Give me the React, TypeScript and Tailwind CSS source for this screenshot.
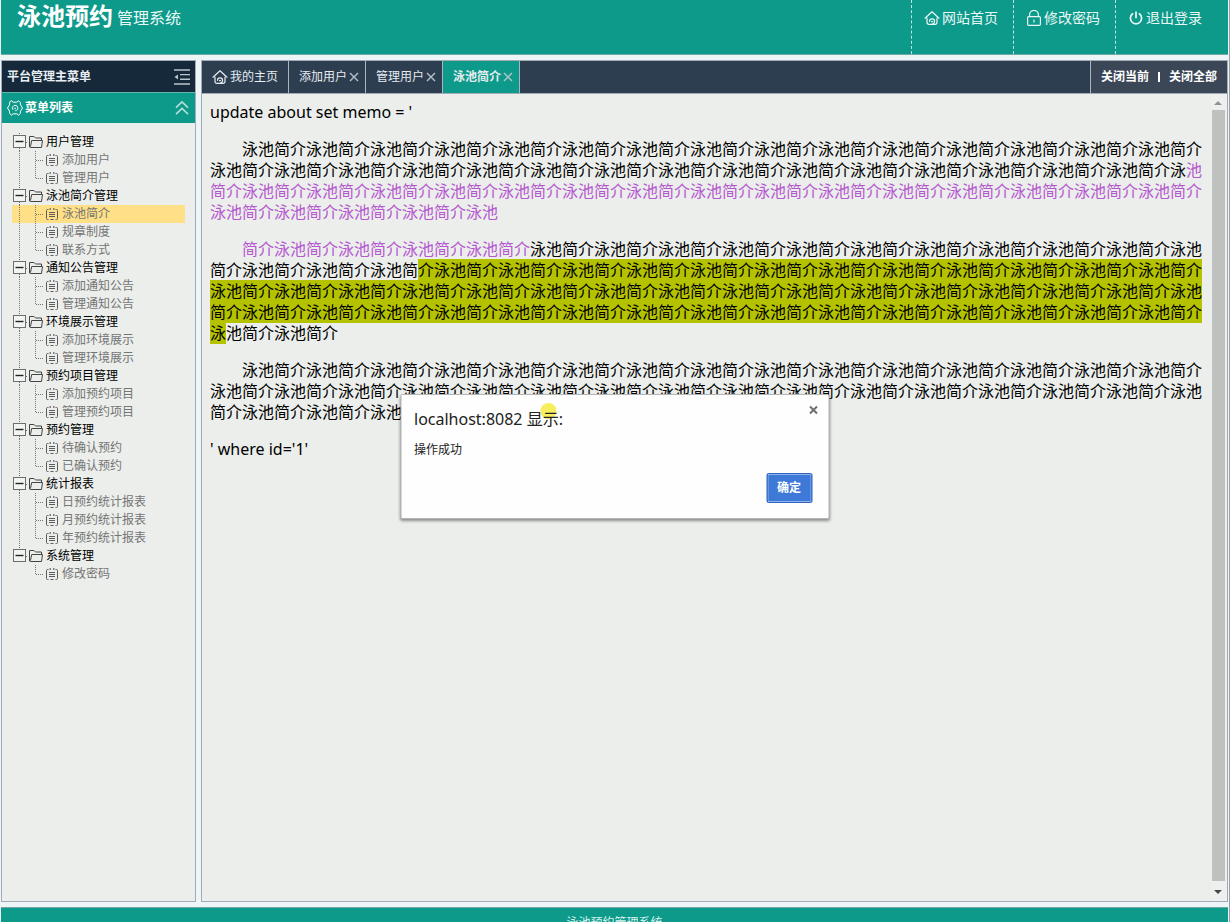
import { useState } from "react";
import clsx from "clsx";

const menu = [
	{ title: "用户管理", items: ["添加用户", "管理用户"] },
	{ title: "泳池简介管理", items: ["泳池简介", "规章制度", "联系方式"] },
	{ title: "通知公告管理", items: ["添加通知公告", "管理通知公告"] },
	{ title: "环境展示管理", items: ["添加环境展示", "管理环境展示"] },
	{ title: "预约项目管理", items: ["添加预约项目", "管理预约项目"] },
	{ title: "预约管理", items: ["待确认预约", "已确认预约"] },
	{
		title: "统计报表",
		items: ["日预约统计报表", "月预约统计报表", "年预约统计报表"],
	},
	{ title: "系统管理", items: ["修改密码"] },
];

const tabs = ["添加用户", "管理用户", "泳池简介"];

const intro = (n: number) => "泳池简介".repeat(n);

function HomeIcon() {
	return (
		<svg className="size-4 shrink-0" viewBox="0 0 16 16" fill="none" stroke="currentColor" strokeWidth="1.2" strokeLinecap="round" strokeLinejoin="round">
			<path d="M1 8.2 8 1.8l7 6.4" />
			<path d="M3 8v4.2c0 1.3.8 2.1 2.1 2.1h5.8c1.3 0 2.1-.8 2.1-2.1V8" />
			<path d="M8.4 14.2c1.5-.4 2.2-1.4 2.2-2.7A2.6 2.6 0 0 0 8 8.9a2.5 2.5 0 0 0-2.5 2.4" />
			<path d="M7.5 11.6h1" />
		</svg>
	);
}

function LockIcon() {
	return (
		<svg className="size-4 shrink-0" viewBox="0 0 16 16" fill="none" stroke="currentColor" strokeWidth="1.2" strokeLinecap="round">
			<rect x="1.6" y="6.6" width="12.8" height="8.8" rx="1.2" />
			<path d="M3.6 6.4V4.8a4.4 4.4 0 0 1 8.8 0v1.6M8 10v2" />
		</svg>
	);
}

function PowerIcon() {
	return (
		<svg className="size-4 shrink-0" viewBox="0 0 16 16" fill="none" stroke="currentColor" strokeWidth="1.7" strokeLinecap="round">
			<path d="M8 2v5.6M4.6 3.8a5.6 5.6 0 1 0 6.8 0" />
		</svg>
	);
}

function GearIcon() {
	return (
		<svg className="size-4 shrink-0" viewBox="0 0 16 16" fill="none" stroke="currentColor" strokeWidth="1" strokeLinejoin="round" strokeLinecap="round">
			<path d="M4.4.8 6.2 2.2h3.600L11.600.8l1.700 1.700.2 2.300L15.500 8l-2 3.200-.2 2.300-1.700 1.700-1.800-1.400H6.200l-1.800 1.400-1.700-1.700-.2-2.300L.5 8l2-3.200.2-2.300z" />
			<path d="M5.800 9.500a2.700 2.700 0 1 1 2.800 1.200" />
			<path d="M7.700 8.300h.9" />
		</svg>
	);
}

function CollapseIcon() {
	return (
		<svg className="h-4 w-4" viewBox="0 0 16 16" stroke="currentColor" strokeWidth="1.4">
			<path d="M0 1h16M6 5.6h10M6 10.2h10M0 15h16" />
			<path d="m.5 8 3.5-2.6v5.2z" fill="currentColor" stroke="none" />
		</svg>
	);
}

function ChevronsUpIcon() {
	return (
		<svg className="h-4 w-3.5" viewBox="0 0 14 16" fill="none" stroke="currentColor" strokeWidth="1.6">
			<path d="m1 7.6 6-5.8 6 5.8M1 14.2l6-5.8 6 5.8" />
		</svg>
	);
}

// expander box with the dotted trunk running through it
function ToggleIcon({ last }: { last: boolean }) {
	return (
		<svg className="h-[18px] w-4 shrink-0" viewBox="0 0 16 18" fill="none" stroke="#6a6e70">
			<path d={last ? "M7.5 0v3" : "M7.5 0v3M7.5 15v3"} strokeDasharray="1 1" />
			<path d="M14 9.5h3" strokeDasharray="1 1" />
			<rect x="1.5" y="2.5" width="12" height="12" fill="#f2f4f2" />
			<path d="M3.5 8.5h8" strokeWidth="1.4" stroke="#222" />
		</svg>
	);
}

function FolderIcon() {
	return (
		<svg className="h-[18px] w-4 shrink-0" viewBox="0 0 16 18" fill="none" stroke="#444" strokeLinejoin="round">
			<path d="M13.500 7.500v-2.500H7.500l-1.500-1.500H1.500v10.500l1.500.5h10.500l1-7H3.700L2.500 13.500" />
		</svg>
	);
}

function BranchLines({ lastGroup, lastItem }: { lastGroup: boolean; lastItem: boolean }) {
	return (
		<svg className="h-[18px] w-8 shrink-0" viewBox="0 0 32 18" stroke="#777" strokeDasharray="1 1">
			{!lastGroup && <path d="M7.5 0v18" />}
			<path d={lastItem ? "M23.5 0v10" : "M23.5 0v18"} />
			<path d="M24 9.5h8" />
		</svg>
	);
}

function DocIcon() {
	return (
		<svg className="ml-px h-[18px] w-4 shrink-0" viewBox="0 0 16 18" fill="none" stroke="#5a5a5a" strokeLinejoin="round">
			<path d="M3.500 4.500h-1q-1 0-1 1v8q0 1 1 1h1M10.500 4.500h1q1 0 1 1v8q0 1-1 1h-1" />
			<path d="M4.500 4h1.500M8 4h1.500" strokeWidth="1.500" />
			<path d="M4 7.500h6M4 9.500h6M4 11.500h6M5.500 14.500h3" />
		</svg>
	);
}

function Sidebar() {
	const [active, setActive] = useState("泳池简介");
	return (
		<aside className="flex w-[195px] shrink-0 flex-col border border-[#a3abb8] bg-[#ebeeeb]">
			<div className="flex h-[31px] items-center justify-between bg-[#15293a] pr-[5px] pl-[5px] text-[#e8eef2]">
				<h2 className="font-bold">平台管理主菜单</h2>
				<button type="button" aria-label="收起" className="text-[#b9c4cc]">
					<CollapseIcon />
				</button>
			</div>
			<div className="flex h-[31px] items-center justify-between border-t border-[#5fb8ac] bg-[#0d9a8a] pr-1.5 pl-[5px] text-white">
				<h2 className="flex items-center gap-0.5 font-bold">
					<GearIcon />
					菜单列表
				</h2>
				<button type="button" aria-label="折叠" className="text-[#b5e0da]">
					<ChevronsUpIcon />
				</button>
			</div>
			<ul className="p-2.5 leading-[18px]">
				{menu.map((group, g) => {
					const lastGroup = g === menu.length - 1;
					return (
						<li key={group.title}>
							<button type="button" className="flex h-[18px] w-full items-center text-black">
								<ToggleIcon last={lastGroup} />
								<FolderIcon />
								<span className="pl-0.5">{group.title}</span>
							</button>
							<ul>
								{group.items.map((item, i) => (
									<li key={item}>
										<a
											href="#"
											onClick={() => setActive(item)}
											className={clsx(
												"flex h-[18px] items-center text-[#757575]",
												item === active && "bg-[#ffe086]",
											)}
										>
											<BranchLines
												lastGroup={lastGroup}
												lastItem={i === group.items.length - 1}
											/>
											<DocIcon />
											<span className="pl-px">{item}</span>
										</a>
									</li>
								))}
							</ul>
						</li>
					);
				})}
			</ul>
		</aside>
	);
}

function TabBar() {
	return (
		<div className="flex h-[33px] shrink-0 border-b border-[#a3abb8] bg-[#2d3e50] text-[#e6ecf0]">
			<button type="button" className="flex w-[87px] items-center justify-center gap-0.5 border-r border-[#a9b4bf]">
				<HomeIcon />
				我的主页
			</button>
			{tabs.map((tab) => (
				<button
					type="button"
					key={tab}
					className={clsx(
						"flex w-[77px] items-center gap-0.5 border-r border-[#a9b4bf] pl-2.5",
						tab === "泳池简介" && "bg-[#0d9a8a] font-bold",
					)}
				>
					{tab}
					<svg className="size-2.5 shrink-0" viewBox="0 0 10 10" stroke="#b4c3cb" strokeWidth="1.4">
						<path d="m1 1 8 8M9 1 1 9" />
					</svg>
				</button>
			))}
			<div className="ml-auto flex w-[137px] items-center justify-between border-l border-[#a9b4bf] bg-[#3b4656] px-2.5 font-bold text-white">
				<button type="button">关闭当前</button>
				<span className="h-2.5 w-0.5 bg-white" />
				<button type="button">关闭全部</button>
			</div>
		</div>
	);
}

function ScrollBar() {
	return (
		<div className="flex w-4 shrink-0 flex-col items-center bg-[#edf0ef] pr-0.5">
			<svg className="h-4 w-3" viewBox="0 0 12 16" fill="#8f9392">
				<path d="M2 11h8L6 7z" />
			</svg>
			<div className="w-[13px] flex-1 bg-[#bec1be]" />
			<svg className="h-5 w-3" viewBox="0 0 12 20" fill="#444849">
				<path d="M2 9h8l-4 4z" />
			</svg>
		</div>
	);
}

function AlertDialog({ onClose }: { onClose: () => void }) {
	return (
		<div
			role="alertdialog"
			aria-labelledby="alert-title"
			className="absolute top-[394px] left-1/2 flex w-[429px] -translate-x-1/2 flex-col rounded-xs border border-[#b4b6b5] bg-[#fdfefd] pt-3.5 pr-4 pb-[15px] pl-[13px] text-[#222] shadow-[0_2px_3px_rgba(0,0,0,0.4)]"
		>
			<span className="absolute top-2 left-[139px] size-4 rounded-full bg-[#f6ee5c]" />
			<h2 id="alert-title" className="relative text-base leading-5">
				localhost:8082 显示:
			</h2>
			<button type="button" aria-label="关闭" onClick={onClose} className="absolute top-2.5 right-2.5">
				<svg className="size-2.5" viewBox="0 0 10 10" stroke="#6f6f6f" strokeWidth="2">
					<path d="m1.500 1.500 7 7M8.500 1.500l-7 7" />
				</svg>
			</button>
			<p className="mt-3 leading-[18px]">操作成功</p>
			<button
				type="button"
				onClick={onClose}
				className="mt-3.5 h-[30px] w-[46px] self-end rounded-xs border border-[#2f63bb] bg-[#3f79d8] font-bold text-white inset-ring inset-ring-[#8fb3ee]"
			>
				确定
			</button>
		</div>
	);
}

export default function App() {
	const [open, setOpen] = useState(true);
	return (
		<div className="relative h-screen overflow-hidden border-r border-[#9aa0a8] bg-[#eef5f7] font-['Noto_Sans','Noto_Sans_CJK_SC',sans-serif] text-xs text-black">
			{/* footer hangs half below the fold */}
			<div className="flex h-[calc(100vh+15px)] flex-col gap-[5px] px-px">
				<header className="flex h-[55px] shrink-0 justify-between border-b border-[#6fa8a4] bg-[#0d9a8a] text-[#e9f8f6]">
					<h1 className="flex gap-1 pl-4 text-base leading-9">
						<span className="text-2xl leading-8 font-bold text-white">泳池预约</span>
						管理系统
					</h1>
					<nav className="flex text-sm leading-9">
						<a href="#" className="flex w-[102px] items-start border-l border-dashed border-[#bfeae4] pl-3">
							<span className="flex items-center gap-0.5"><HomeIcon />网站首页</span>
						</a>
						<a href="#" className="flex w-[102px] items-start border-l border-dashed border-[#bfeae4] pl-3">
							<span className="flex items-center gap-0.5"><LockIcon />修改密码</span>
						</a>
						<a href="#" className="flex w-[113px] items-start border-l border-dashed border-[#bfeae4] pl-3">
							<span className="flex items-center gap-0.5"><PowerIcon />退出登录</span>
						</a>
					</nav>
				</header>

				<div className="flex min-h-0 flex-1 gap-[5px]">
					<Sidebar />
					<section className="flex min-w-0 flex-1 flex-col border border-[#a3abb8] bg-[#ebeeeb]">
						<TabBar />
						<div className="flex min-h-0 flex-1">
							<main className="min-w-0 flex-1 space-y-4 p-2 text-base leading-[21px]">
								<p>update about set memo = '</p>
								<p className="indent-8">
									{intro(30)}泳
									<span className="text-[#b558d0]">池简介{intro(19)}泳池</span>
								</p>
								<p className="indent-8">
									<span className="text-[#b558d0]">简介{intro(4)}</span>
									{intro(10)}泳池简介{intro(2)}泳池简
									<span className="bg-[#b5c200]">介{intro(27)}泳池简介{intro(15)}泳</span>
									池简介泳池简介
								</p>
								<p className="indent-8">{intro(34)}</p>
								<p>' where id='1'</p>
							</main>
							<ScrollBar />
						</div>
					</section>
				</div>

				<footer className="h-[30px] shrink-0 border-t border-[#6fa8a4] bg-[#0d9a8a] text-center leading-[30px] text-[#d8f3ef]">
					泳池预约管理系统
				</footer>
			</div>

			{open && <AlertDialog onClose={() => setOpen(false)} />}
		</div>
	);
}
